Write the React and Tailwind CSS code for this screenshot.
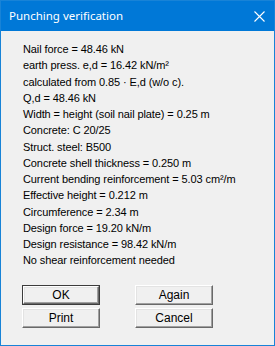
const LINES = [
  "Nail force = 48.46 kN",
  "earth press. e,d = 16.42 kN/m²",
  "calculated from 0.85 · E,d (w/o c).",
  "Q,d = 48.46 kN",
  "Width = height (soil nail plate) = 0.25 m",
  "Concrete: C 20/25",
  "Struct. steel: B500",
  "Concrete shell thickness = 0.250 m",
  "Current bending reinforcement = 5.03 cm²/m",
  "Effective height = 0.212 m",
  "Circumference = 2.34 m",
  "Design force = 19.20 kN/m",
  "Design resistance = 98.42 kN/m",
  "No shear reinforcement needed",
];

function WinButton({ children, isDefault }) {
  const face =
    "flex w-full items-center justify-center border border-t-white border-l-white border-b-[#696969] border-r-[#696969] bg-[#f0f0f0] text-[12px] leading-none text-black shadow-[inset_-1px_-1px_0_#a0a0a0,inset_1px_1px_0_#e3e3e3]";
  if (isDefault) {
    return (
      <div className="h-[20px] border border-[#3c3c3c]">
        <button type="button" className={`h-[18px] ${face}`}>
          {children}
        </button>
      </div>
    );
  }
  return (
    <button type="button" className={`h-[20px] ${face}`}>
      {children}
    </button>
  );
}

export default function App() {
  return (
    <div
      className="flex h-[346px] w-[275px] flex-col border border-[#1883d7] bg-[#f0f0f0]"
      style={{ fontFamily: '"Liberation Sans", Arial, sans-serif' }}
    >
      <div className="flex h-[30px] shrink-0 items-center justify-between bg-[#0078d7] pl-[8px] pr-[9px] text-white">
        <span className="text-[11.5px]" style={{ fontFamily: '"Noto Sans", "Open Sans", sans-serif' }}>
          Punching verification
        </span>
        <svg width="11" height="11" viewBox="0 0 11 11" className="mt-[1px]">
          <path d="M0.5 0.5 L10.5 10.5 M10.5 0.5 L0.5 10.5" stroke="white" strokeWidth="1.1" />
        </svg>
      </div>

      <div className="flex flex-col pl-[22px] pt-[10px]">
        {LINES.map((line) => (
          <div key={line} className="h-[16.25px] text-[11px] leading-[16.25px] tracking-[-0.1px] text-black">
            {line}
          </div>
        ))}
      </div>

      <div className="ml-[21px] mt-[16px] grid grid-cols-[78px_78px] gap-x-[35px] gap-y-[3px]">
        <WinButton isDefault>OK</WinButton>
        <WinButton>Again</WinButton>
        <WinButton>Print</WinButton>
        <WinButton>Cancel</WinButton>
      </div>
    </div>
  );
}
